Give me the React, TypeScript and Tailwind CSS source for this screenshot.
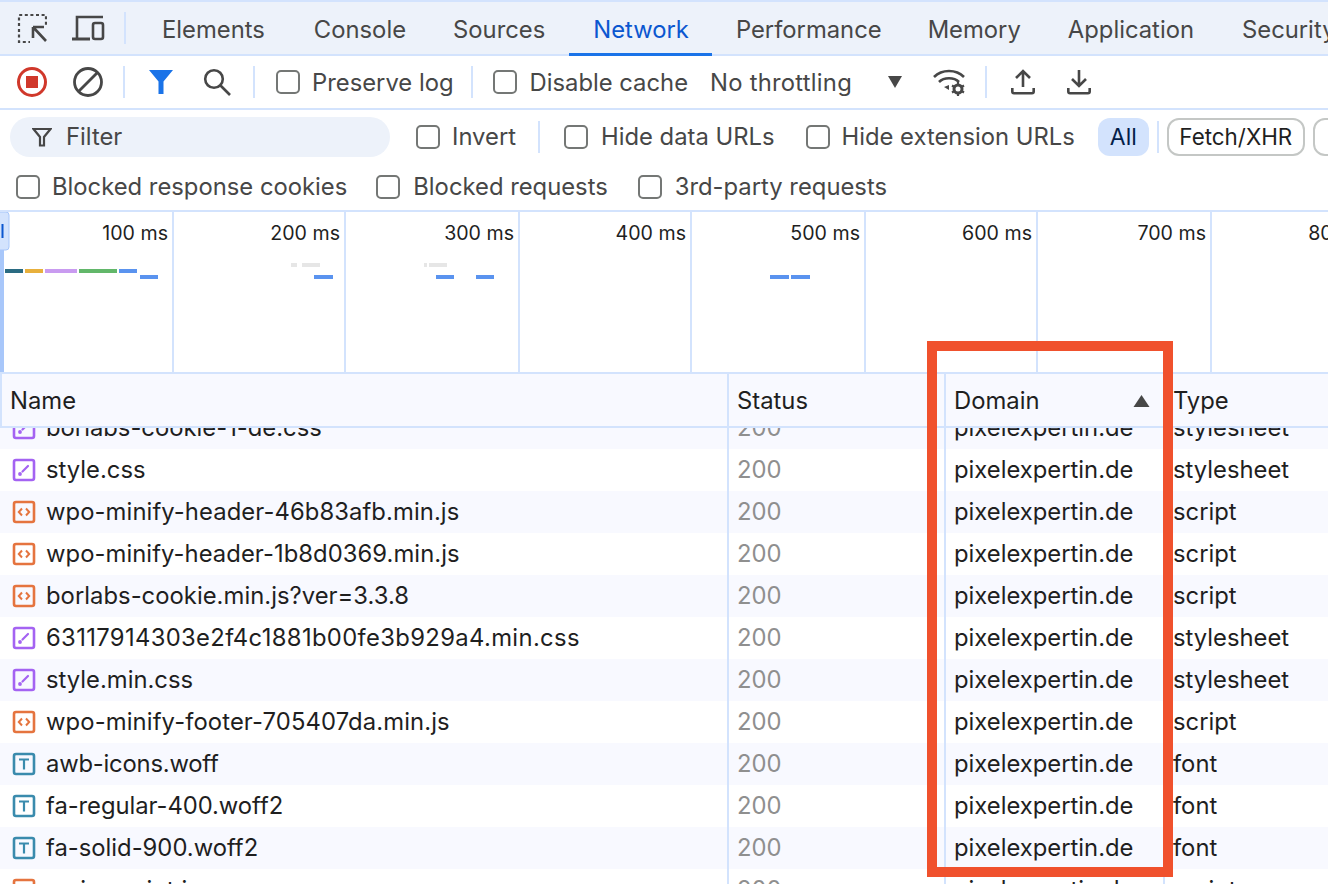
const FONT = "font-['Inter','Liberation_Sans',sans-serif]";

function Check({ className = "" }: { className?: string }) {
  return <span className={"block w-6 h-6 shrink-0 rounded-[5px] border-2 border-[#747775] bg-white " + className} />;
}

function Sep({ className = "" }: { className?: string }) {
  return <span className={"block w-0.5 h-8 shrink-0 bg-[#d3e3fd] " + className} />;
}

function Label({ children, className = "" }: { children: React.ReactNode; className?: string }) {
  return <span className={"whitespace-nowrap text-[#474747] " + className}>{children}</span>;
}

function FileIcon({ kind }: { kind: "css" | "js" | "font" }) {
  const color = kind === "css" ? "#a463f2" : kind === "js" ? "#e5743f" : "#3a8bad";
  return (
    <svg width="24" height="24" viewBox="0 0 24 24" className="shrink-0 mr-[10px]" fill="none">
      <rect x="2" y="2" width="20" height="20" rx="2" stroke={color} strokeWidth="2.6" />
      {kind === "css" && (
        <>
          <circle cx="8" cy="16" r="1.9" fill={color} />
          <path d="M10.5 13.5L16 8" stroke={color} strokeWidth="2.2" strokeLinecap="round" />
        </>
      )}
      {kind === "js" && (
        <path d="M10 8.5L6.8 12l3.2 3.5M14 8.5l3.2 3.5-3.2 3.5" stroke={color} strokeWidth="2" />
      )}
      {kind === "font" && <path d="M7 7.5h10M12 7.5V17.5" stroke={color} strokeWidth="2.2" />}
    </svg>
  );
}

const rows: [string, "css" | "js" | "font", string, string][] = [
  ["borlabs-cookie-1-de.css", "css", "stylesheet", ""],
  ["style.css", "css", "stylesheet", ""],
  ["wpo-minify-header-46b83afb.min.js", "js", "script", "tracking-[0.09px]"],
  ["wpo-minify-header-1b8d0369.min.js", "js", "script", "tracking-[0.06px]"],
  ["borlabs-cookie.min.js?ver=3.3.8", "js", "script", "tracking-[0.03px]"],
  ["63117914303e2f4c1881b00fe3b929a4.min.css", "css", "stylesheet", "tracking-[0.35px]"],
  ["style.min.css", "css", "stylesheet", ""],
  ["wpo-minify-footer-705407da.min.js", "js", "script", "tracking-[0.12px]"],
  ["awb-icons.woff", "font", "font", "tracking-[-0.2px]"],
  ["fa-regular-400.woff2", "font", "font", "tracking-[-0.05px]"],
  ["fa-solid-900.woff2", "font", "font", ""],
  ["main-script.js", "js", "script", ""],
];

const ticks = ["100 ms", "200 ms", "300 ms", "400 ms", "500 ms", "600 ms", "700 ms", "800 ms"];
const tickWidths = ["w-[174px]", "w-[172px]", "w-[174px]", "w-[172px]", "w-[174px]", "w-[172px]", "w-[174px]", "w-[172px]"];

const tabs: [string, string][] = [
  ["Elements", "ml-3 pl-6 pr-[25px] pt-px text-[#474747]"],
  ["Console", "pl-6 pr-[23px] pt-px text-[#474747]"],
  ["Sources", "px-6 pt-px text-[#474747]"],
  ["Network", "pl-6 pr-[23px] pt-1 text-[#0b57d0] border-b-[3px] border-[#1a73e8]"],
  ["Performance", "pl-6 pr-[22px] pt-px text-[#474747]"],
  ["Memory", "pl-6 pr-[23px] pt-px text-[#474747]"],
  ["Application", "pl-6 pr-6 pt-px text-[#474747]"],
  ["Security", "px-6 pt-px text-[#474747]"],
];

const bars: [number, number, number, string][] = [
  [5, 18, 269, "#2a6b82"],
  [25, 18, 269, "#e8b03c"],
  [45, 32, 269, "#c99bf0"],
  [79, 38, 269, "#62b76a"],
  [119, 18, 269, "#5a93ef"],
  [140, 18, 275, "#5a93ef"],
  [291, 6, 263, "#e6e6e6"],
  [302, 18, 263, "#e6e6e6"],
  [314, 19, 275, "#5a93ef"],
  [424, 3, 263, "#e6e6e6"],
  [429, 18, 263, "#e6e6e6"],
  [436, 18, 275, "#5a93ef"],
  [476, 18, 275, "#5a93ef"],
  [770, 19, 275, "#5a93ef"],
  [791, 19, 275, "#5a93ef"],
];

export default function App() {
  return (
    <div className={"relative w-[1328px] h-[884px] overflow-hidden bg-white text-[23.8px] leading-none " + FONT}>
      {/* tab bar */}
      <div className="flex items-center h-14 bg-[#edf2fa] border-t-2 border-b-2 border-[#d3e3fd]">
        <svg width="30" height="30" viewBox="0 0 30 30" fill="none" className="ml-[17px] shrink-0">
          <path d="M2 13V2h27v12" stroke="#474747" strokeWidth="2.2" strokeDasharray="3 2.6" />
          <path d="M2 16v13h11" stroke="#474747" strokeWidth="2.2" strokeDasharray="3 2.6" />
          <path d="M16 14h11M16 14v11M16 14l13 14" stroke="#474747" strokeWidth="2.6" />
        </svg>
        <svg width="34" height="26" viewBox="0 0 34 26" fill="none" className="ml-[24px] shrink-0">
          <path d="M6 23V2h26" stroke="#474747" strokeWidth="2.6" />
          <path d="M1 24h18" stroke="#474747" strokeWidth="3" />
          <rect x="22" y="8" width="10" height="16" rx="2" stroke="#474747" strokeWidth="2.6" />
        </svg>
        <Sep className="ml-[19px]" />
        {tabs.map(([t, cls]) => (
          <div key={t} className={"flex items-center h-[54px] -mb-0.5 shrink-0 " + cls}>
            {t}
          </div>
        ))}
      </div>

      {/* toolbar */}
      <div className="flex items-center h-[54px] border-b-2 border-[#d3e3fd]">
        <span className="ml-[17px] flex items-center justify-center w-[30px] h-[30px] rounded-full border-[3px] border-[#d0382b] shrink-0">
          <span className="block w-3 h-3 bg-[#d0382b]" />
        </span>
        <svg width="30" height="30" viewBox="0 0 30 30" fill="none" className="ml-[26px] shrink-0">
          <circle cx="15" cy="15" r="13.5" stroke="#474747" strokeWidth="2.8" />
          <path d="M6 24L24 6" stroke="#474747" strokeWidth="2.8" />
        </svg>
        <Sep className="ml-5" />
        <svg width="24" height="24" viewBox="0 0 24 24" className="ml-6 shrink-0">
          <path d="M0 0h24l-9.5 11.5V24h-5V11.5z" fill="#1a73e8" />
        </svg>
        <svg width="28" height="28" viewBox="0 0 28 28" fill="none" className="ml-[30px] shrink-0">
          <circle cx="11" cy="11" r="8.8" stroke="#474747" strokeWidth="2.6" />
          <path d="M17.5 17.5L27 27" stroke="#474747" strokeWidth="2.6" />
        </svg>
        <Sep className="ml-[22px]" />
        <Check className="ml-[21px]" />
        <Label className="ml-3 pt-px">Preserve log</Label>
        <Sep className="ml-[17px]" />
        <Check className="ml-5" />
        <Label className="ml-[13px] pt-px">Disable cache</Label>
        <Label className="ml-[22px] pt-px tracking-[0.25px]">No throttling</Label>
        <svg width="16" height="12" viewBox="0 0 16 12" className="ml-[35px] shrink-0">
          <path d="M1 0h14L8 12z" fill="#474747" />
        </svg>
        <svg width="34" height="28" viewBox="0 0 34 28" fill="none" className="ml-[29px] shrink-0">
          <path d="M2 9C10 1 24 1 32 9" stroke="#474747" strokeWidth="2.6" />
          <path d="M7 14c5-5 15-5 20 0" stroke="#474747" strokeWidth="2.6" />
          <path d="M12 19l5-2v5z" fill="#474747" />
          <circle cx="26" cy="21" r="4" stroke="#474747" strokeWidth="3" />
          <path d="M26 14v3M26 25v3M20 17.5l2.5 1.5M32 17.5L29.5 19M20 24.5l2.5-1.5M32 24.5L29.5 23" stroke="#474747" strokeWidth="2.2" />
        </svg>
        <Sep className="ml-[19px]" />
        <svg width="24" height="26" viewBox="0 0 24 26" fill="none" className="ml-6 shrink-0">
          <path d="M12 18V2M5 9l7-7 7 7" stroke="#474747" strokeWidth="2.6" />
          <path d="M1.3 19v3.5c0 1 .7 1.7 1.7 1.7h18c1 0 1.7-.7 1.7-1.7V19" stroke="#474747" strokeWidth="2.6" />
        </svg>
        <svg width="24" height="26" viewBox="0 0 24 26" fill="none" className="ml-8 shrink-0">
          <path d="M12 1v16M5 10l7 7 7-7" stroke="#474747" strokeWidth="2.6" />
          <path d="M1.3 19v3.5c0 1 .7 1.7 1.7 1.7h18c1 0 1.7-.7 1.7-1.7V19" stroke="#474747" strokeWidth="2.6" />
        </svg>
      </div>

      {/* filter row */}
      <div className="flex items-center h-[54px] overflow-hidden">
        <div className="flex items-center ml-[10px] w-[380px] h-10 rounded-full bg-[#edf2fa] shrink-0">
          <svg width="20" height="20" viewBox="0 0 20 20" fill="none" className="ml-[22px] shrink-0">
            <path d="M1.5 2h17l-6.5 8v8.5H8V10z" stroke="#474747" strokeWidth="2.2" />
          </svg>
          <Label className="ml-[14px]">Filter</Label>
        </div>
        <Check className="ml-[26px]" />
        <Label className="ml-3">Invert</Label>
        <Sep className="ml-[22px]" />
        <Check className="ml-6" />
        <Label className="ml-[13px]">Hide data URLs</Label>
        <Check className="ml-[31px]" />
        <Label className="ml-3">Hide extension URLs</Label>
        <span className="ml-[23px] flex items-center justify-center w-[51px] h-[38px] rounded-xl bg-[#d3e3fd] text-[#041e49] text-[23px] shrink-0">All</span>
        <Sep className="ml-2" />
        <span className="ml-2 flex items-center justify-center w-[138px] h-[38px] rounded-xl border-2 border-[#c4c7c5] text-[#1f1f1f] text-[22.4px] shrink-0">Fetch/XHR</span>
        <span className="ml-2 w-[60px] h-[38px] rounded-xl border-2 border-[#c4c7c5] shrink-0" />
      </div>

      {/* more filters */}
      <div className="flex items-center h-[46px]">
        <Check className="ml-4" />
        <Label className="ml-3">Blocked response cookies</Label>
        <Check className="ml-[29px]" />
        <Label className="ml-[13px]">Blocked requests</Label>
        <Check className="ml-[30px]" />
        <Label className="ml-[13px]">3rd-party requests</Label>
      </div>

      {/* overview */}
      <div className="relative flex h-[164px] border-t-2 border-b-2 border-[#d3e3fd] overflow-hidden text-[#1f1f1f] text-[19.6px]">
        {ticks.map((t, i) => (
          <div key={t} className={"shrink-0 h-full flex justify-end pr-1 pt-3 border-r-2 border-[#d3e3fd] " + tickWidths[i]}>
            {t}
          </div>
        ))}
        <svg width="1328" height="160" viewBox="0 212 1328 160" className="absolute left-0 top-0">
          {bars.map(([x, w, y, c], i) => (
            <rect key={i} x={x} y={y} width={w} height="4" fill={c} />
          ))}
          <rect x="0" y="212" width="4" height="160" fill="#a8c7fa" />
          <rect x="-4" y="212" width="13" height="38" rx="3" fill="#d3e3fd" stroke="#a8c7fa" />
          <rect x="1.5" y="224" width="2" height="14" fill="#0b57d0" />
        </svg>
      </div>

      {/* table header */}
      <div className="relative z-10 flex h-[54px] bg-[#f8f9ff] border-b-2 border-[#d3e3fd] border-l-2 text-[#1f1f1f]">
        <div className="w-[727px] shrink-0 pl-2 pt-px flex items-center border-r-2 border-[#d3e3fd]">Name</div>
        <div className="w-[217px] shrink-0 pl-2 pt-px flex items-center border-r-2 border-[#d3e3fd]">Status</div>
        <div className="w-[219px] shrink-0 pl-2 pr-[15px] pt-px flex items-center justify-between">
          Domain
          <svg width="17" height="12" viewBox="0 0 17 12">
            <path d="M8.5 0l8 12H.5z" fill="#474747" />
          </svg>
        </div>
        <div className="flex-1 pl-2 pt-px flex items-center">Type</div>
      </div>

      {/* rows */}
      <div className="h-[458px] overflow-hidden">
        <div className="-mt-[21px] text-[#1f1f1f]">
          {rows.map(([name, kind, type, track], i) => (
            <div key={i} className={"flex items-center h-[42px] " + (i % 2 === 0 ? "bg-[#f8f9ff]" : "bg-white")}>
              <div className="w-[729px] h-full shrink-0 pl-3 flex items-center border-r-2 border-[#d3e3fd] whitespace-nowrap">
                <FileIcon kind={kind} />
                <span className={track}>{name}</span>
              </div>
              <div className="w-[217px] h-full shrink-0 pl-2 flex items-center border-r-2 border-[#d3e3fd] text-[#8f8f8f]">200</div>
              <div className="w-[219px] h-full shrink-0 pl-2 flex items-center border-r-2 border-[#d3e3fd]">pixelexpertin.de</div>
              <div className="flex-1 pl-2 flex items-center">{type}</div>
            </div>
          ))}
        </div>
      </div>

      {/* annotation */}
      <div className="absolute z-20 left-[927px] top-[341px] w-[246px] h-[536px] border-[10px] border-[#f0512d] pointer-events-none" />
    </div>
  );
}
